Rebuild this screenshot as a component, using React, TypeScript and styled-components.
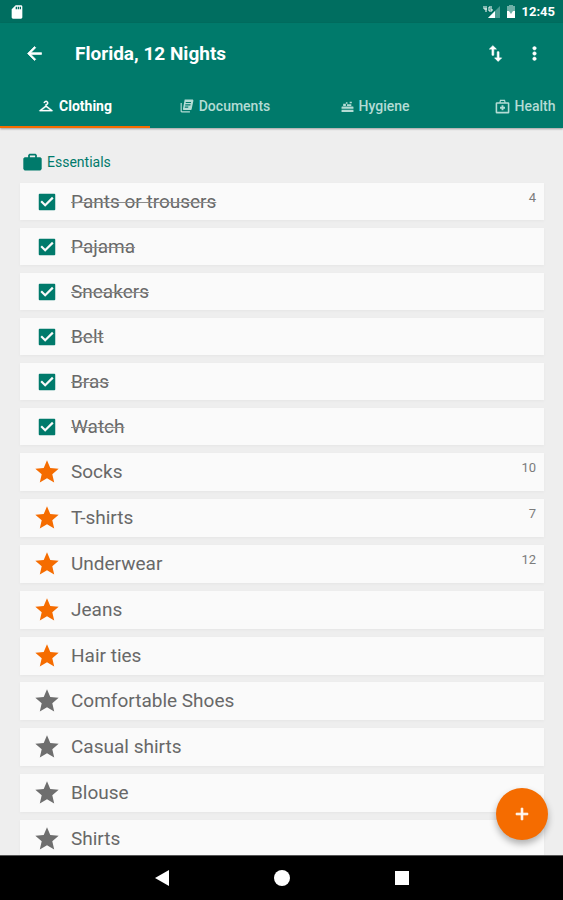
import React, { useState } from "react";
import styled, { createGlobalStyle } from "styled-components";

const color = {
  teal: "#007a6b",
  tealDark: "#006e60",
  orange: "#f56c00",
  page: "#eeeeee",
  card: "#fafafa",
  text: "#686868",
  count: "#7c7c7c",
};

const GlobalStyle = createGlobalStyle`
  *, *::before, *::after { box-sizing: border-box; }
  body { margin: 0; font-family: Roboto, "Noto Sans", sans-serif; background: ${color.page}; }
  button { font: inherit; color: inherit; background: none; border: 0; padding: 0; cursor: pointer; }
`;

const Screen = styled.div`
  position: relative;
  display: flex;
  flex-direction: column;
  height: 100vh;
  overflow: hidden;
`;

const StatusBar = styled.div`
  flex: none;
  display: flex;
  align-items: center;
  gap: 6px;
  height: 23px;
  padding: 0 8px 0 9px;
  background: ${color.tealDark};
  color: #fff;
`;

const Clock = styled.time`
  font-size: 13px;
  line-height: 16px;
  font-weight: 700;
`;

const Spacer = styled.span`
  flex: 1;
`;

const Header = styled.header`
  flex: none;
  z-index: 1;
  background: ${color.teal};
  color: #fff;
  box-shadow: 0 1px 2px rgba(0, 0, 0, 0.35);
`;

const Toolbar = styled.div`
  display: flex;
  align-items: center;
  height: 61px;
  padding: 0 9px 0 15px;
`;

const IconButton = styled.button`
  display: grid;
  place-items: center;
  width: 39px;
  height: 40px;
`;

const Title = styled.h1`
  flex: 1;
  margin: 0 0 0 21px;
  font-size: 19px;
  line-height: 24px;
  font-weight: 700;
`;

const Tabs = styled.div`
  display: flex;
  overflow: hidden;
`;

const Tab = styled.button<{ $active: boolean }>`
  flex: none;
  display: flex;
  align-items: center;
  justify-content: center;
  gap: 5px;
  width: 150px;
  height: 44px;
  padding-top: 2px;
  border-bottom: 2px solid ${(p) => (p.$active ? color.orange : "transparent")};
  color: ${(p) => (p.$active ? "#ffffff" : "#b4dcd5")};
  font-size: 14px;
  line-height: 16px;
  font-weight: ${(p) => (p.$active ? 700 : 500)};
`;

const Content = styled.main`
  flex: 1;
  min-height: 0;
  overflow: hidden;
  padding: 24px 19px 0 20px;
`;

const SectionTitle = styled.h2`
  display: flex;
  align-items: center;
  gap: 4px;
  margin: 0 0 11px;
  padding-left: 2px;
  height: 20px;
  color: ${color.teal};
  font-size: 14px;
  line-height: 20px;
  font-weight: 400;
`;

const Groups = styled.div`
  display: flex;
  flex-direction: column;
`;

const List = styled.ul`
  display: flex;
  flex-direction: column;
  gap: 8px;
  margin: 0;
  padding: 0;
  list-style: none;

  & + & {
    margin-top: 7px;
  }
  &:nth-child(2) {
    margin-top: 8px;
  }
`;

const Row = styled.li<{ $done: boolean }>`
  display: flex;
  height: ${(p) => (p.$done ? 37 : 38)}px;
  padding: 0 8px 0 13px;
  background: ${color.card};
  box-shadow: 0 1px 3px rgba(0, 0, 0, 0.04);
`;

const Mark = styled.span`
  display: grid;
  place-items: center;
  align-self: center;
  width: 28px;
  height: 28px;
  color: ${color.teal};

  > * {
    grid-area: 1 / 1;
  }
  > svg {
    pointer-events: none;
  }
`;

const CheckInput = styled.input`
  appearance: none;
  width: 16px;
  height: 16px;
  margin: 0;
`;

const StarButton = styled.button<{ $important: boolean }>`
  display: grid;
  color: ${(p) => (p.$important ? color.orange : "#6e6e6e")};
`;

const Name = styled.label<{ $done: boolean }>`
  flex: 1;
  align-self: center;
  margin-left: 10px;
  color: ${color.text};
  font-size: 19px;
  line-height: 24px;
  text-decoration: ${(p) => (p.$done ? "line-through 1px #8c8c8c" : "none")};
`;

const Count = styled.span`
  padding-top: 6px;
  color: ${color.count};
  font-size: 13px;
  line-height: 18px;
`;

const Fab = styled.button`
  position: absolute;
  right: 15px;
  bottom: 60px;
  z-index: 2;
  display: grid;
  place-items: center;
  width: 52px;
  height: 52px;
  border-radius: 50%;
  background: ${color.orange};
  color: #fff;
  box-shadow: 0 4px 7px rgba(0, 0, 0, 0.3);
`;

const NavBar = styled.nav`
  flex: none;
  display: flex;
  justify-content: center;
  align-items: center;
  gap: 80px;
  height: 45px;
  border-top: 1px solid #555;
  background: #000;
  color: #fff;
`;

const NavButton = styled.button`
  display: grid;
  place-items: center;
  width: 40px;
  height: 40px;
`;

const paths = {
  back: "M20 11H7.83l5.59-5.59L12 4l-8 8 8 8 1.41-1.41L7.83 13H20v-2z",
  swap: "M16 17.01V10h-2v7.01h-3L15 21l4-3.99h-3zM9 3L5 6.99h3V14h2V6.99h3L9 3z",
  more: "M12 8c1.1 0 2-.9 2-2s-.9-2-2-2-2 .9-2 2 .9 2 2 2zm0 2c-1.1 0-2 .9-2 2s.9 2 2 2 2-.9 2-2-.9-2-2-2zm0 6c-1.1 0-2 .9-2 2s.9 2 2 2 2-.9 2-2-.9-2-2-2z",
  check: "M20 3H4a1 1 0 0 0-1 1v16a1 1 0 0 0 1 1h16a1 1 0 0 0 1-1V4a1 1 0 0 0-1-1zM10 17.300l-5.200-5.200 1.700-1.700L10 13.900l7.500-7.500 1.700 1.700L10 17.300z",
  star: "M12 17.27L18.18 21l-1.64-7.03L22 9.24l-7.19-.61L12 2 9.19 8.63 2 9.24l5.46 4.73L5.82 21z",
  add: "M19 13h-6v6h-2v-6H5v-2h6V5h2v6h6v2z",
  sd: "M18 2h-8L4 8v12c0 1.1.9 2 2 2h12c1.1 0 2-.9 2-2V4c0-1.1-.9-2-2-2zm-6 6h-2V4h2v4zm3 0h-2V4h2v4zm3 0h-2V4h2v4z",
  work: "M8.500 2h7L17 3.500V6h4l1.500 1.500v12L21 21H3l-1.500-1.500v-12L3 6h4V3.500zM9 4v2h6V4z",
  hanger: "M21.6 18.2L13 11.75v-.91c1.65-.49 2.8-2.17 2.43-4.05-.26-1.31-1.3-2.4-2.61-2.7C10.54 3.57 8.5 5.3 8.5 7.5h2c0-.83.67-1.5 1.5-1.5s1.5.67 1.5 1.5c0 .84-.69 1.52-1.53 1.5-.54-.01-.97.45-.97.99v1.76L2.4 18.2c-.77.58-.36 1.8.6 1.8h18c.96 0 1.37-1.22.6-1.8zM6 18l6-4.5 6 4.5H6z",
  documents: "M3 7H1v14c0 1.1.9 2 2 2h14v-2H3zM8 1L5 17c0 1.100.9 2 2 2h11c1.100 0 2-.9 2-2l3-14c0-1.100-.9-2-2-2zm2 4h9l-.4 2H9.600zm-.8 4h9l-.4 2H8.800zm-.8 4h6l-.4 2H8z",
  hygiene: "M2 12h20a1 1 0 0 1 1 1v3H1v-3a1 1 0 0 1 1-1zM1 18h22v4H1zM4 7h5v4H4zM11 8h8v3h-8zM9 4h3v3H9zM16 3h4v3h-4z",
  health: "M8 1h8l1 4h4a2 2 0 0 1 2 2v14a2 2 0 0 1-2 2H3a2 2 0 0 1-2-2V7a2 2 0 0 1 2-2h4zm1.500 2L9 5h6l-.5-2zM3.500 7.500v13h17v-13zM10.500 10h3v2.500H16v3h-2.500V18h-3v-2.500H8v-3h2.500z",
};

type IconName = keyof typeof paths;

function Icon({ name, size, weight = 0 }: { name: IconName; size: number; weight?: number }) {
  return (
    <svg
      width={size}
      height={size}
      viewBox="0 0 24 24"
      fill="currentColor"
      fillRule="evenodd"
      stroke={weight ? "currentColor" : "none"}
      strokeWidth={weight}
      aria-hidden="true"
    >
      <path d={paths[name]} />
    </svg>
  );
}

const tabs: { label: string; icon: IconName; size: number; weight?: number }[] = [
  { label: "Clothing", icon: "hanger", size: 16, weight: 0.4 },
  { label: "Documents", icon: "documents", size: 14 },
  { label: "Hygiene", icon: "hygiene", size: 13 },
  { label: "Health", icon: "health", size: 15 },
];

type Item = { name: string; count?: number };

const groups: { kind: "done" | "important" | "normal"; items: Item[] }[] = [
  {
    kind: "done",
    items: [
      { name: "Pants or trousers", count: 4 },
      { name: "Pajama" },
      { name: "Sneakers" },
      { name: "Belt" },
      { name: "Bras" },
      { name: "Watch" },
    ],
  },
  {
    kind: "important",
    items: [
      { name: "Socks", count: 10 },
      { name: "T-shirts", count: 7 },
      { name: "Underwear", count: 12 },
      { name: "Jeans" },
      { name: "Hair ties" },
    ],
  },
  {
    kind: "normal",
    items: [{ name: "Comfortable Shoes" }, { name: "Casual shirts" }, { name: "Blouse" }, { name: "Shirts" }],
  },
];

export default function App() {
  const [active, setActive] = useState("Clothing");
  return (
    <Screen>
      <GlobalStyle />
      <StatusBar>
        <Icon name="sd" size={16} />
        <Spacer />
        <svg width="17" height="14" viewBox="0 0 17 14" aria-hidden="true">
          <path d="M17 1v12H5z" fill="#4b9c91" />
          <path d="M12 6v7H5z" fill="#fff" />
          <path d="M1 1v3h3M3 1v6M9 2H6v4h3V4H7" fill="none" stroke="#fff" />
        </svg>
        <svg width="10" height="14" viewBox="0 0 10 14" aria-hidden="true">
          <path d="M3 0h4v1h2v12H1V1h2z" fill="#6fb0a7" />
          <path d="M1 6h2l2 3 2-3h2v7H1z" fill="#fff" />
        </svg>
        <Clock>12:45</Clock>
      </StatusBar>
      <Header>
        <Toolbar>
          <IconButton aria-label="Back">
            <Icon name="back" size={21} weight={0.8} />
          </IconButton>
          <Title>Florida, 12 Nights</Title>
          <IconButton aria-label="Sort">
            <Icon name="swap" size={21} weight={0.8} />
          </IconButton>
          <IconButton aria-label="More options">
            <Icon name="more" size={21} weight={0.6} />
          </IconButton>
        </Toolbar>
        <Tabs role="tablist">
          {tabs.map((t) => (
            <Tab
              key={t.label}
              role="tab"
              aria-selected={active === t.label}
              $active={active === t.label}
              onClick={() => setActive(t.label)}
            >
              <Icon name={t.icon} size={t.size} weight={t.weight} />
              {t.label}
            </Tab>
          ))}
        </Tabs>
      </Header>
      <Content>
        <SectionTitle>
          <Icon name="work" size={21} />
          Essentials
        </SectionTitle>
        <Groups>
          {groups.map(({ kind, items }) => (
            <List key={kind}>
              {items.map((item) => {
                const id = item.name.toLowerCase().replace(/\s/g, "-");
                const done = kind === "done";
                return (
                  <Row key={id} $done={done}>
                    <Mark>
                      {done ? (
                        <>
                          <CheckInput type="checkbox" id={id} defaultChecked />
                          <Icon name="check" size={22} />
                        </>
                      ) : (
                        <StarButton id={id} $important={kind === "important"} aria-pressed={kind === "important"}>
                          <Icon name="star" size={28} />
                        </StarButton>
                      )}
                    </Mark>
                    <Name htmlFor={id} $done={done}>
                      {item.name}
                    </Name>
                    {item.count !== undefined && <Count>{item.count}</Count>}
                  </Row>
                );
              })}
            </List>
          ))}
        </Groups>
      </Content>
      <Fab aria-label="Add item">
        <Icon name="add" size={20} weight={1} />
      </Fab>
      <NavBar aria-label="System">
        <NavButton aria-label="Back">
          <svg width="16" height="16" viewBox="0 0 16 16" fill="currentColor" aria-hidden="true">
            <path d="M15 0v16L1 8z" />
          </svg>
        </NavButton>
        <NavButton aria-label="Home">
          <svg width="16" height="16" viewBox="0 0 16 16" fill="currentColor" aria-hidden="true">
            <circle cx="8" cy="8" r="8" />
          </svg>
        </NavButton>
        <NavButton aria-label="Recent apps">
          <svg width="16" height="16" viewBox="0 0 16 16" fill="currentColor" aria-hidden="true">
            <path d="M1 1h14v14H1z" />
          </svg>
        </NavButton>
      </NavBar>
    </Screen>
  );
}
